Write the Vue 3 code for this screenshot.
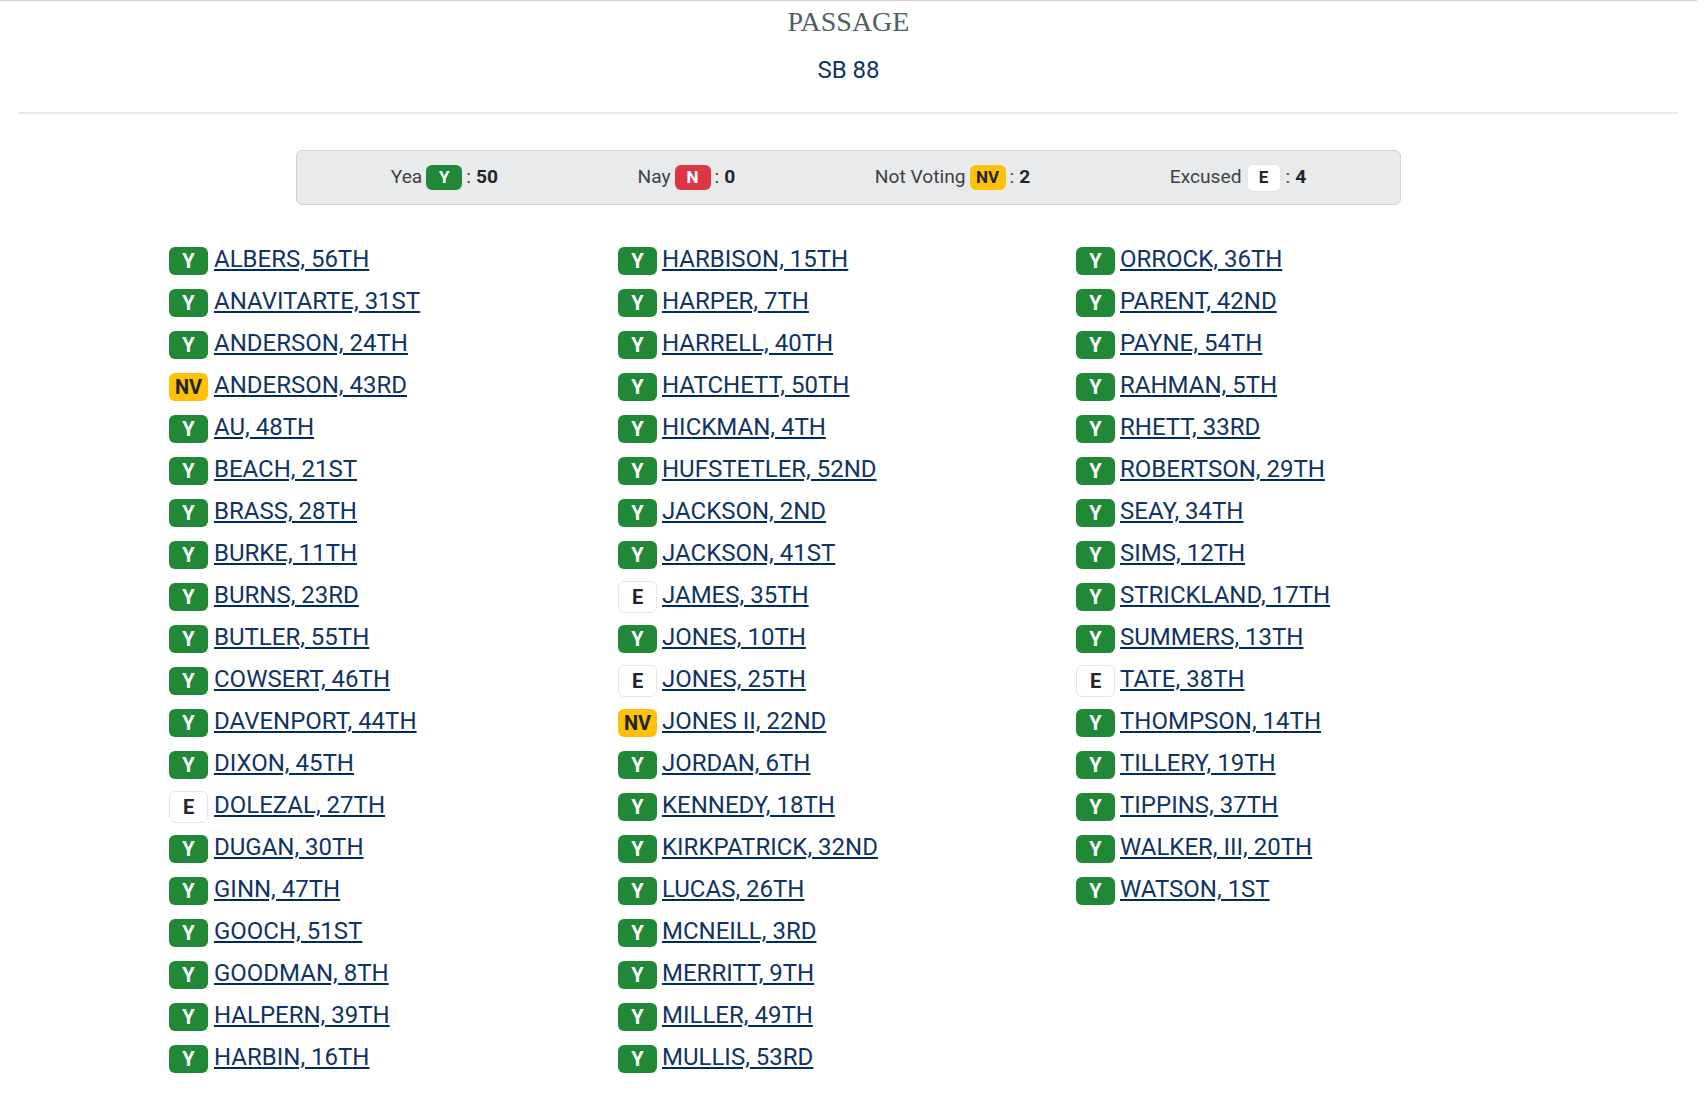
<script setup>
const summary = [
  { label: 'Yea', code: 'Y', count: 50 },
  { label: 'Nay', code: 'N', count: 0 },
  { label: 'Not Voting', code: 'NV', count: 2 },
  { label: 'Excused', code: 'E', count: 4 },
]
const parse = (s) => s.split('|').map((r) => {
  const i = r.indexOf(' ')
  return { code: r.slice(0, i), name: r.slice(i + 1) }
})
const columns = [
  { w: 'c1', rows: parse('Y ALBERS, 56TH|Y ANAVITARTE, 31ST|Y ANDERSON, 24TH|NV ANDERSON, 43RD|Y AU, 48TH|Y BEACH, 21ST|Y BRASS, 28TH|Y BURKE, 11TH|Y BURNS, 23RD|Y BUTLER, 55TH|Y COWSERT, 46TH|Y DAVENPORT, 44TH|Y DIXON, 45TH|E DOLEZAL, 27TH|Y DUGAN, 30TH|Y GINN, 47TH|Y GOOCH, 51ST|Y GOODMAN, 8TH|Y HALPERN, 39TH|Y HARBIN, 16TH') },
  { w: 'c2', rows: parse('Y HARBISON, 15TH|Y HARPER, 7TH|Y HARRELL, 40TH|Y HATCHETT, 50TH|Y HICKMAN, 4TH|Y HUFSTETLER, 52ND|Y JACKSON, 2ND|Y JACKSON, 41ST|E JAMES, 35TH|Y JONES, 10TH|E JONES, 25TH|NV JONES II, 22ND|Y JORDAN, 6TH|Y KENNEDY, 18TH|Y KIRKPATRICK, 32ND|Y LUCAS, 26TH|Y MCNEILL, 3RD|Y MERRITT, 9TH|Y MILLER, 49TH|Y MULLIS, 53RD') },
  { w: 'c3', rows: parse('Y ORROCK, 36TH|Y PARENT, 42ND|Y PAYNE, 54TH|Y RAHMAN, 5TH|Y RHETT, 33RD|Y ROBERTSON, 29TH|Y SEAY, 34TH|Y SIMS, 12TH|Y STRICKLAND, 17TH|Y SUMMERS, 13TH|E TATE, 38TH|Y THOMPSON, 14TH|Y TILLERY, 19TH|Y TIPPINS, 37TH|Y WALKER, III, 20TH|Y WATSON, 1ST') },
]
</script>

<template>
  <div class="page">
    <header class="head">
      <h1 class="title">PASSAGE</h1>
      <h2 class="bill">SB 88</h2>
    </header>
    <hr class="rule" />
    <section class="summary">
      <div v-for="s in summary" :key="s.code" class="sum-item">
        <span class="sum-text">{{ s.label }}</span>
        <span class="badge small" :class="'b-' + s.code">{{ s.code }}</span>
        <span class="sum-text">:</span>
        <b class="sum-text">{{ s.count }}</b>
      </div>
    </section>
    <section class="cols">
      <div v-for="c in columns" :key="c.w" class="col" :class="c.w">
        <div v-for="r in c.rows" :key="r.name" class="row">
          <span class="badge" :class="'b-' + r.code">{{ r.code }}</span>
          <a href="#" class="name" @click.prevent>{{ r.name }}</a>
        </div>
      </div>
    </section>
  </div>
</template>

<style>
html, body { background: #fff; }
</style>

<style scoped>
.page {
  width: 1697px;
  box-sizing: border-box;
  height: 1109px;
  overflow: hidden;
  padding: 0 19px;
  border-top: 1px solid #cfcfcf;
  font-family: Roboto, "Liberation Sans", sans-serif;
  color: #212529;
}
.head { text-align: center; }
.title {
  margin: 0;
  padding-top: 5px;
  font-family: "Liberation Serif", serif;
  font-weight: 400;
  font-size: 28px;
  line-height: 32px;
  color: #4f6064;
}
.bill {
  margin: 0;
  padding-top: 14px;
  font-weight: 400;
  font-size: 24px;
  line-height: 36px;
  color: #0f3464;
}
.rule {
  margin: 24px 0 0;
  border: 0;
  border-top: 2px solid #e8e8e8;
}
.summary {
  box-sizing: border-box;
  width: 1105px;
  height: 55px;
  margin: 36px auto 0;
  padding: 0 24px;
  display: flex;
  justify-content: space-around;
  align-items: center;
  background: #e9eaec;
  border: 1px solid #cfd1d3;
  border-radius: 6px;
  font-size: 19.2px;
}
.sum-item {
  display: flex;
  align-items: center;
  gap: 4px;
  color: #3d4246;
}
.sum-text { margin-bottom: 2px; }
.sum-item b { font-weight: 700; color: #212529; margin-left: 1px; }
.badge {
  box-sizing: border-box;
  width: 39px;
  height: 28px;
  flex: none;
  display: inline-flex;
  align-items: center;
  justify-content: center;
  border-radius: 6px;
  font-size: 20px;
  font-weight: 700;
  line-height: 1;
}
.badge.b-E { height: 32px; margin: -2px 0; }
.badge.small { width: 36px; height: 25px; font-size: 17px; }
.badge.small.b-E { width: 34px; height: 28px; margin: -2px 1px; }
.b-Y { background: #218838; color: #fff; }
.b-N { background: #dc3545; color: #fff; }
.b-NV { background: #ffc107; color: #212529; }
.b-E { background: #fff; color: #212529; border: 1px solid #e3e5ea; }
.cols {
  display: flex;
  padding-left: 150px;
  margin-top: 35px;
}
.col { flex: none; }
.c1 { width: 449px; }
.c2 { width: 458px; }
.row {
  height: 42px;
  display: flex;
  align-items: center;
  gap: 6px;
}
.c2 .row, .c3 .row { gap: 5px; }
.name {
  font-size: 24px;
  line-height: 28px;
  margin-bottom: 4px;
  color: #0f3464;
  text-decoration: underline #002d5f;
  text-decoration-thickness: 2px;
  text-underline-offset: 2px;
}
</style>
